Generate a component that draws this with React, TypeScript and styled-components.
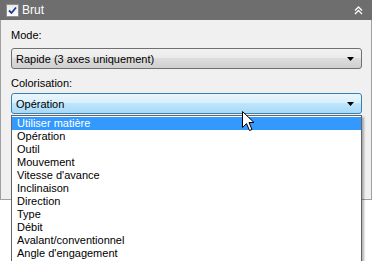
import React from 'react';
import styled, { createGlobalStyle } from 'styled-components';

const GlobalStyle = createGlobalStyle`
    html, body {
        margin: 0;
        padding: 0;
        background: #ffffff;
    }
    body {
        font-family: Tahoma, "Liberation Sans", Arial, sans-serif;
        font-size: 11px;
        color: #000;
    }
`;

const items = [
    'Utiliser matière',
    'Opération',
    'Outil',
    'Mouvement',
    "Vitesse d'avance",
    'Inclinaison',
    'Direction',
    'Type',
    'Débit',
    'Avalant/conventionnel',
    "Angle d'engagement",
];

const Arrow = () => (
    <svg width="7" height="4" viewBox="0 0 7 4">
        <path d="M0 0 H7 L3.5 4 Z" fill="#000" />
    </svg>
);

const App: React.FC = () => {
    return (
        <Screen>
            <GlobalStyle />
            <Panel>
                <Header>
                    <Check>
                        <svg width="9" height="9" viewBox="0 0 9 9">
                            <path d="M1 4.5 L3.5 7 L8 1.5" stroke="#1f3a93" strokeWidth="1.8" fill="none" />
                        </svg>
                    </Check>
                    <HeaderTitle>Brut</HeaderTitle>
                    <Collapse>
                        <svg width="9" height="9" viewBox="0 0 9 9">
                            <path d="M1 4.5 L4.5 1 L8 4.5 M1 8 L4.5 4.5 L8 8" stroke="#fff" strokeWidth="1.3" fill="none" />
                        </svg>
                    </Collapse>
                </Header>
                <Body>
                    <Label $gap={6}>Mode:</Label>
                    <Combo>
                        <ComboText>Rapide (3 axes uniquement)</ComboText>
                        <Arrow />
                    </Combo>
                    <Label $gap={3}>Colorisation:</Label>
                    <ComboWrap>
                        <Combo $hot>
                            <ComboText>Opération</ComboText>
                            <Arrow />
                        </Combo>
                        <List>
                            {items.map((item, i) => (
                                <Item key={item} $selected={i === 0}>{item}</Item>
                            ))}
                        </List>
                        <Cursor>
                            <svg width="13" height="21" viewBox="0 0 13 21">
                                <path
                                    d="M0.5 0.5 V16.5 L4.5 12.5 L7.5 19.5 L10 18.5 L7 11.5 L12 11.5 Z"
                                    fill="#fff"
                                    stroke="#000"
                                    strokeWidth="1"
                                    strokeLinejoin="round"
                                />
                            </svg>
                        </Cursor>
                    </ComboWrap>
                </Body>
            </Panel>
        </Screen>
    );
};

const Screen = styled.div`
    width: 372px;
    height: 261px;
    position: relative;
    overflow: hidden;
    background: #fff;
`;

const Panel = styled.div`
    width: 372px;
    display: flex;
    flex-direction: column;
`;

const Header = styled.div`
    height: 20px;
    background: #6e6e6e;
    display: flex;
    align-items: center;
    padding: 0 8px 0 6px;
    box-sizing: border-box;
`;

const Check = styled.span`
    width: 11px;
    height: 11px;
    background: linear-gradient(#e8e8e8, #ffffff);
    border: 1px solid #8e8f8f;
    display: flex;
    align-items: center;
    justify-content: center;
`;

const HeaderTitle = styled.span`
    color: #fff;
    font-size: 12px;
    margin-left: 3px;
    flex: 1;
`;

const Collapse = styled.span`
    display: flex;
    margin-right: 1px;
`;

const Body = styled.div`
    height: 180px;
    box-sizing: border-box;
    background: #f0f0f0;
    border: 1px solid #a0a0a0;
    border-top: none;
    padding: 9px 9px 0 10px;
    display: flex;
    flex-direction: column;
`;

const Label = styled.div<{ $gap: number }>`
    line-height: 13px;
    height: 13px;
    margin-bottom: ${p => p.$gap}px;
`;

const ComboWrap = styled.div`
    position: relative;
`;

const Combo = styled.div<{ $hot?: boolean }>`
    height: 21px;
    flex-shrink: 0;
    box-sizing: border-box;
    border: 1px solid ${p => (p.$hot ? '#3c7fb1' : '#707070')};
    border-radius: 3px;
    background: ${p =>
        p.$hot
            ? 'linear-gradient(#eaf6fd 0%, #d9f0fc 45%, #bee6fd 50%, #a7d9f5 100%)'
            : 'linear-gradient(#f2f2f2 0%, #ebebeb 45%, #dddddd 50%, #cfcfcf 100%)'};
    display: flex;
    align-items: center;
    padding: 0 7px 0 4px;
    margin-bottom: 8px;
`;

const ComboText = styled.span`
    flex: 1;
`;

const List = styled.div`
    position: absolute;
    top: 22px;
    left: 0;
    width: 351px;
    box-sizing: border-box;
    background: #fff;
    border: 1px solid #646464;
    padding: 1px 0;
    box-shadow: 2px 2px 2px rgba(0, 0, 0, 0.3);
`;

const Item = styled.div<{ $selected?: boolean }>`
    height: 13px;
    line-height: 13px;
    padding-left: 5px;
    background: ${p => (p.$selected ? '#3399ff' : 'transparent')};
    color: ${p => (p.$selected ? '#fff' : '#000')};
`;

const Cursor = styled.div`
    position: absolute;
    left: 231px;
    top: 18px;
    display: flex;
`;

export default App;
